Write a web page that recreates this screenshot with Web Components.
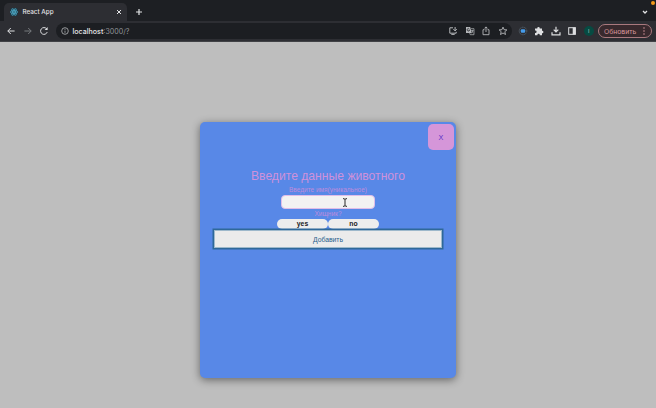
<!DOCTYPE html>
<html lang="ru"><head><meta charset="utf-8"><title>React App</title>
<style>html,body{margin:0;height:100%;overflow:hidden;background:#bebebe;font-family:Inter,"Liberation Sans",sans-serif}</style></head>
<body><app-window></app-window>
<script>
const define=(name,html)=>customElements.define(name,class extends HTMLElement{
  constructor(){super();this.attachShadow({mode:'open'}).innerHTML='<style>*{box-sizing:border-box}svg{display:block;overflow:visible}</style>'+html;}
});
const paths={
  back:'<path d="M8.6 5H1.8M4.8 2 1.8 5 4.8 8"/>',
  forward:'<path d="M1.4 5h6.8M5.2 2 8.2 5 5.2 8"/>',
  reload:'<path d="M8.2 6.1A3.4 3.4 0 1 1 7.6 2.8"/><path d="M8.6 1v3H5.6z" fill="currentColor" stroke="none"/>',
  info:'<circle cx="5" cy="5" r="3.3" stroke-width=".8"/><path d="M5 4.6v2.2M5 2.9v.9" stroke-width=".8"/>',
  install:'<path d="M5 1.8H1.8v5.4h6.4V5.8M3.3 8.4h3.4M7.1 1v3.7M5.4 3.2l1.7 1.7 1.7-1.7"/>',
  translate:'<path d="M1 1h4.2l1.5 6H1z" fill="currentColor" stroke="none"/><path d="M6 2.7h3v6H5.2L4.7 7M6.2 4.5h2.3M7.4 3.9v.6M8 4.6C7.8 5.8 7 6.6 6.4 7M6.7 5.3l1.6 1.6" stroke-width=".7"/><path d="M4.4 3A1.3 1.3 0 1 0 4.6 4.2H3.5" stroke="#1c1e22" stroke-width=".7"/>',
  share:'<path d="M3.5 3.7H2v5h6v-5H6.5M5 6V.9M3.5 2.4 5 .9l1.5 1.5" stroke-width=".9"/>',
  star:'<path d="m5 1.1 1.1 2.6 2.8.2-2.1 1.8.7 2.8L5 7 2.5 8.5l.7-2.8L1.1 3.9l2.8-.2z" stroke-width=".9"/>',
  ext:'<circle cx="5" cy="5" r="3.8" stroke="#53616d" stroke-dasharray="1.3 .7"/><rect x="2.8" y="3.3" width="4.4" height="3.4" rx="1" fill="#459bea" stroke="none"/>',
  puzzle:'<path d="M1 2.5h2.3v-.4a1.2 1.2 0 0 1 2.4 0v.4H8v2.3h.2a1.2 1.2 0 0 1 0 2.4H8v2H5.8v-.3a1.2 1.2 0 0 0-2.4 0v.3H1V7h.4a1.2 1.2 0 0 0 0-2.4H1z" fill="currentColor" stroke="none"/>',
  download:'<path d="M5 .8v4.7M2.7 3.6 5 5.9l2.3-2.3M1 6.3v2.5h8V6.3" stroke-width="1.2"/>',
  panel:'<rect x="1.7" y="1.7" width="6.6" height="6.6"/><path d="M5.7 1.5h3v7h-3z" fill="currentColor" stroke="none"/>',
  close:'<path d="m3 3 4 4M7 3 3 7"/>',
  plus:'<path d="M5 2v6M2 5h6" stroke-width="1.2"/>',
  chevron:'<path d="m3 4 2 2 2-2" stroke-width="1.3"/>',
  dots:'<g fill="currentColor" stroke="none"><circle cx="5" cy="2" r=".75"/><circle cx="5" cy="5" r=".75"/><circle cx="5" cy="8" r=".75"/></g>',
  react:'<rect x="1" y="1" width="8" height="8" rx="1" fill="#20333e" stroke="none"/><g stroke="#4fb4d3" stroke-width=".65"><ellipse cx="5" cy="5" rx="3.8" ry="1.5"/><ellipse cx="5" cy="5" rx="3.8" ry="1.5" transform="rotate(60 5 5)"/><ellipse cx="5" cy="5" rx="3.8" ry="1.5" transform="rotate(120 5 5)"/></g><circle cx="5" cy="5" r=".8" fill="#61dafb" stroke="none"/>'
};
customElements.define('ui-icon',class extends HTMLElement{
  constructor(){super();this.attachShadow({mode:'open'});}
  connectedCallback(){this.shadowRoot.innerHTML='<style>:host{display:block;flex:none;width:10px;height:10px}svg{display:block}</style><svg width="10" height="10" viewBox="0 0 10 10" fill="none" stroke="currentColor" stroke-width="1">'+paths[this.getAttribute('name')]+'</svg>';}
});
define('tab-strip',`<style>
:host{display:flex;height:21px;padding:3px 6px 0 4px;background:#1d1f23;color:#e3e4e6;position:relative}
.tab{display:flex;align-items:center;width:123px;padding:0 3px 0 5px;height:18px;background:#2d2e33;border-radius:5px 5px 0 0;font-size:6.3px;font-weight:500}
.tab span{margin-left:3.5px;flex:1}.new{margin:4px 0 0 6.5px}.menu{margin:4px 0 0 auto}
.dot{position:absolute;right:1.5px;top:1px;width:4px;height:4px;border-radius:50%;background:#f39a1b}
</style><div class="tab"><ui-icon name="react"></ui-icon><span>React App</span><ui-icon name="close"></ui-icon></div><ui-icon class="new" name="plus"></ui-icon><ui-icon class="menu" name="chevron"></ui-icon><i class="dot"></i>`);
define('tool-bar',`<style>
:host{display:flex;align-items:center;height:21px;padding:0 4px 0 6px;background:#2d2e33;border-bottom:1px solid #414246;color:#dedfe1}
.nav{display:flex;gap:6.5px;width:50px}.dim{color:#777a7e}
.address{display:flex;align-items:center;width:456px;height:16px;padding:0 4.5px 0 4px;border-radius:8px;background:#1c1e22;color:#b5b7ba}
.url{flex:1;margin-left:2.5px;font-size:7.1px;color:#929499}.url b{font-weight:500;color:#e4e5e7}
.actions{display:flex;gap:6.5px}.tools{display:flex;align-items:center;gap:6.4px;margin-left:6px}
.avatar{width:10px;height:10px;border-radius:50%;background:#064b42;color:#bed0cc;font-size:5px;line-height:10px;text-align:center}
.update{display:flex;align-items:center;justify-content:space-between;margin-left:auto;width:54px;height:14px;padding:0 2px 0 5px;border:1px solid #a9797e;border-radius:7px;background:#38292d;color:#d8979c;font-size:6.8px}
</style><div class="nav"><ui-icon name="back"></ui-icon><ui-icon class="dim" name="forward"></ui-icon><ui-icon name="reload"></ui-icon></div>
<div class="address"><ui-icon name="info"></ui-icon><div class="url"><b>localhost</b>:3000/?</div><div class="actions"><ui-icon name="install"></ui-icon><ui-icon name="translate"></ui-icon><ui-icon name="share"></ui-icon><ui-icon name="star"></ui-icon></div></div>
<div class="tools"><ui-icon name="ext"></ui-icon><ui-icon name="puzzle"></ui-icon><ui-icon name="download"></ui-icon><ui-icon name="panel"></ui-icon><div class="avatar">I</div></div>
<div class="update"><span>Обновить</span><ui-icon name="dots"></ui-icon></div>`);
define('choice-button',`<style>:host{display:block;width:51px;height:10px;border-radius:5px;background:#ededed;color:#202124;font:bold 6.8px/10px "Liberation Sans",sans-serif;text-align:center}</style><slot></slot>`);
define('animal-dialog',`<style>
:host{display:flex;flex-direction:column;align-items:center;position:relative;width:256px;height:256px;padding-top:46px;border-radius:5px;background:#5888e7;box-shadow:0 2px 8px #0007;color:#cf91da;font-family:"Liberation Sans",sans-serif}
.close{position:absolute;right:2px;top:2px;width:26px;height:26px;border-radius:5px;background:#d596d9;color:#5631c5;font-size:7.2px;line-height:27px;text-align:center}
h1{font-size:12.15px;font-weight:400;line-height:16px;height:15px;margin:0;white-space:nowrap}
.label{font-size:6.5px;line-height:7px;height:7px;color:#bd8bdc;white-space:nowrap}.name{margin-top:3px}.pred{margin-top:1px}
.input{width:94px;height:14px;margin-top:2px;border:1px solid #dfbde9;border-radius:4px;background:#f2f2f2;position:relative}
.cursor{position:absolute;left:60px;top:2px}.choices{display:flex;margin-top:2px}
.add{display:flex;align-items:center;justify-content:center;width:230px;height:20px;border:1px solid #2f6899;box-shadow:inset 0 0 0 1px #9db8cb,0 0 0 .5px #2f6899;background:#ebebeb;color:#285d8b;font-size:6.8px}
</style><div class="close">X</div><h1>Введите данные животного</h1><div class="label name">Введите имя(уникальное)</div><div class="input"><svg class="cursor" width="6" height="9" viewBox="0 0 6 9" fill="none" stroke="#292929"><path d="M1 .7h1l1 .7 1-.7h1M3 1.4v6.2M1 8.3h1l1-.7 1 .7h1"/></svg></div><div class="label pred">Хищник?</div><div class="choices"><choice-button>yes</choice-button><choice-button>no</choice-button></div><div class="add">Добавить</div>`);
define('app-window',`<style>:host{display:flex;flex-direction:column;height:100vh}main{flex:1;display:flex;justify-content:center;align-items:flex-start;padding-top:80px;background:#bebebe}</style><tab-strip></tab-strip><tool-bar></tool-bar><main><animal-dialog></animal-dialog></main>`);
</script></body></html>
